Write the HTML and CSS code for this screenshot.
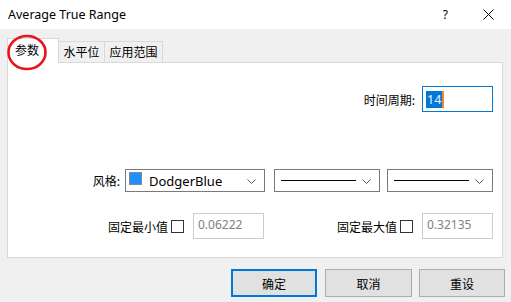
FILE: index.html
```html
<!DOCTYPE html>
<html>
<head>
<meta charset="utf-8">
<link rel="stylesheet" href="styles.css">
</head>
<body>
<div class="window">
  <div class="titlebar">
    <span class="title">Average True Range</span>
    <span class="help">?</span>
    <svg class="close" width="11" height="11" viewBox="0 0 11 11"><path d="M0.5 0.5 L10.5 10.5 M10.5 0.5 L0.5 10.5" stroke="#000" stroke-width="1" fill="none"/></svg>
  </div>
  <div class="content">
    <div class="tabs">
      <div class="tab active">参数</div>
      <div class="tab t2">水平位</div>
      <div class="tab t3">应用范围</div>
    </div>
    <div class="panel">
      <div class="row period">
        <span class="label">时间周期:</span>
        <div class="input focus"><span class="sel">14</span><span class="caret"></span></div>
      </div>
      <div class="row style">
        <span class="label">风格:</span>
        <div class="combo c1"><span class="swatch"></span><span class="ctext">DodgerBlue</span><svg class="chev" width="9" height="5" viewBox="0 0 9 5"><path d="M0.5 0.5 L4.5 4.5 L8.5 0.5" stroke="#555" fill="none"/></svg></div>
        <div class="combo c2"><span class="line"></span><svg class="chev" width="9" height="5" viewBox="0 0 9 5"><path d="M0.5 0.5 L4.5 4.5 L8.5 0.5" stroke="#555" fill="none"/></svg></div>
        <div class="combo c3"><span class="line"></span><svg class="chev" width="9" height="5" viewBox="0 0 9 5"><path d="M0.5 0.5 L4.5 4.5 L8.5 0.5" stroke="#555" fill="none"/></svg></div>
      </div>
      <div class="row fixed">
        <div class="group">
          <span class="label">固定最小值</span>
          <span class="check"></span>
          <div class="input disabled">0.06222</div>
        </div>
        <div class="group">
          <span class="label">固定最大值</span>
          <span class="check"></span>
          <div class="input disabled">0.32135</div>
        </div>
      </div>
    </div>
    <div class="buttons">
      <div class="btn default">确定</div>
      <div class="btn mid">取消</div>
      <div class="btn last">重设</div>
    </div>
  </div>
  <svg class="mark" width="44" height="40" viewBox="0 0 44 40"><ellipse cx="21" cy="19.5" rx="18.5" ry="16.5" stroke="#e8141c" stroke-width="2.6" fill="none"/></svg>
</div>
</body>
</html>
```

FILE: styles.css
```css
* { box-sizing: border-box; }
html, body { margin: 0; padding: 0; }
body {
  width: 511px;
  height: 302px;
  overflow: hidden;
  background: #f0f0f0;
  font-family: "Noto Sans", "Noto Sans CJK SC", sans-serif;
  font-size: 12px;
  color: #000;
}
.window { position: relative; width: 511px; height: 302px; }
.titlebar {
  height: 29px;
  background: #fff;
  display: flex;
  align-items: center;
  padding-left: 8px;
}
.title { font-size: 12.5px; flex: 1; }
.help { font-size: 12px; margin-right: 35px; }
.close { margin-right: 17px; }
.content { padding: 9px 8px 0 7px; }
.tabs { display: flex; align-items: flex-end; height: 24px; position: relative; z-index: 2; }
.tab {
  font-family: "Noto Sans CJK SC", sans-serif;
  height: 21px;
  border-top: 1px solid #d9d9d9;
  border-right: 1px solid #d9d9d9;
  display: flex;
  align-items: center;
  justify-content: center;
  padding-bottom: 1px;
}
.tab.active {
  width: 52px;
  height: 25px;
  margin-bottom: -1px;
  background: #fff;
  border-left: 1px solid #d9d9d9;
  justify-content: flex-start;
  padding-left: 7px;
  padding-bottom: 4px;
}
.t2 { width: 46px; }
.t3 { width: 58px; }
.panel {
  width: 496px;
  height: 196px;
  background: #fff;
  border: 1px solid #d9d9d9;
  padding-right: 9px;
  font-family: "Noto Sans CJK SC", sans-serif;
}
.row { display: flex; align-items: center; justify-content: flex-end; }
.period { margin-top: 23px; }
.period .label { margin-right: 7px; }
.input {
  width: 71px;
  height: 26px;
  border: 1px solid #ccc;
  font-family: "Noto Sans", sans-serif;
  display: flex;
  align-items: center;
  padding-left: 4px;
}
.input.focus { border-color: #0078d7; padding-left: 3px; }
.sel {
  background: #0078d7;
  color: #e8f0ff;
  height: 17px;
  line-height: 17px;
  padding: 0 1px;
  font-size: 12.5px;
}
.caret { width: 2px; height: 17px; background: #f08a24; }
.input.disabled { color: #808080; border-color: #ccc; padding-left: 4px; padding-bottom: 3px; }
.style { margin-top: 57px; }
.style .label { margin-right: 5px; }
.combo {
  height: 23px;
  border: 1px solid #7a7a7a;
  display: flex;
  align-items: center;
  position: relative;
}
.c1 { width: 140px; padding-left: 3px; }
.c2 { width: 106px; margin-left: 9px; padding-left: 6px; }
.c3 { width: 106px; margin-left: 7px; padding-left: 6px; }
.swatch {
  width: 13px; height: 13px;
  background: #1e90ff;
  border: 1px solid #888;
  margin-top: -5px;
}
.ctext { font-family: "Noto Sans", sans-serif; font-size: 13px; margin-left: 7px; flex: 1; padding-top: 1px; }
.line { width: 75px; height: 1px; background: #000; }
.chev { position: absolute; right: 8px; top: 9px; }
.fixed {
  margin-top: 21px;
  display: grid;
  grid-template-columns: 256px 1fr;
}
.group { display: flex; align-items: center; justify-content: flex-end; }
.group .label { margin-right: 3px; }
.check {
  width: 13px; height: 13px;
  border: 1px solid #333;
  background: #fff;
  margin-right: 9px;
}
.buttons {
  display: flex;
  justify-content: flex-end;
  margin-top: 11px;
  margin-right: -2px;
  font-family: "Noto Sans CJK SC", sans-serif;
}
.btn {
  height: 28px;
  width: 86px;
  border: 1px solid #adadad;
  background: #e1e1e1;
  display: flex;
  align-items: center;
  justify-content: center;
}
.btn.mid { width: 87px; margin-left: 8px; }
.btn.last { margin-left: 7px; }
.btn.default { border: 2px solid #0078d7; }
.mark { position: absolute; left: 6px; top: 33px; z-index: 5; }
```
